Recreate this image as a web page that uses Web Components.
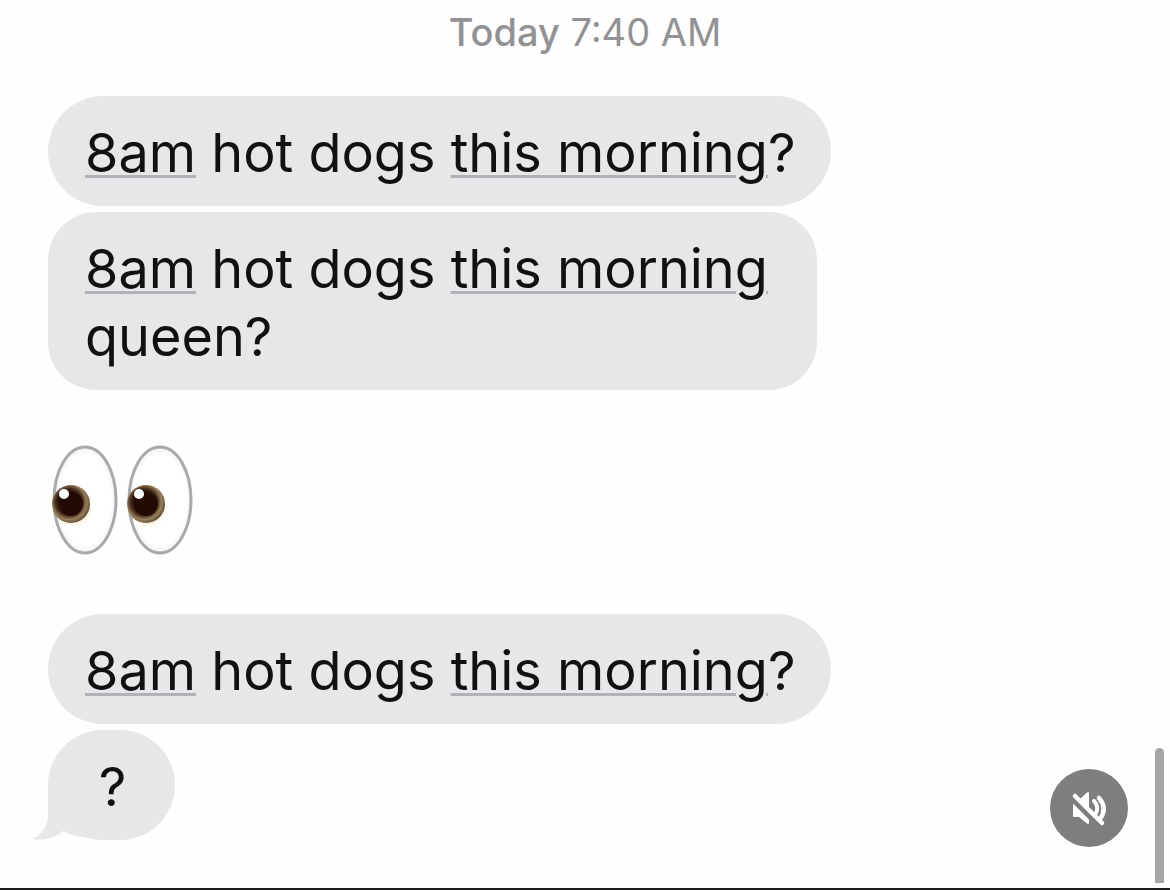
<!DOCTYPE html>
<html lang="en">
<head>
<meta charset="UTF-8">
<meta name="viewport" content="width=device-width, initial-scale=1.0">
<title>Messages</title>
<style>
  body {
    margin: 0;
    background: #fefefe;
    font-family: Inter, Roboto, sans-serif;
  }
</style>
</head>
<body>

<chat-thread>
  <time-stamp slot="header"><b>Today</b> 7:40 AM</time-stamp>
  <chat-bubble><a href="#event">8am</a> hot dogs <a href="#event">this morning</a>?</chat-bubble>
  <chat-bubble narrow><a href="#event">8am</a> hot dogs <a href="#event">this morning</a> queen?</chat-bubble>
  <eyes-emoji></eyes-emoji>
  <chat-bubble><a href="#event">8am</a> hot dogs <a href="#event">this morning</a>?</chat-bubble>
  <chat-bubble tail>?</chat-bubble>
  <scroll-thumb slot="overlay"></scroll-thumb>
  <mute-button slot="overlay"></mute-button>
</chat-thread>

<script>
class ChatThread extends HTMLElement {
  connectedCallback() {
    if (this.shadowRoot) return;

    const shadow = this.attachShadow({ mode: 'open' });

    shadow.innerHTML = `
      <style>
        :host {
          display: flex;
          flex-direction: column;
          position: relative;
          min-height: 100vh;
          box-sizing: border-box;
          border-bottom: 2px solid #1c1c1c;
        }

        header {
          padding: 8px 0 40px;
        }

        main {
          display: flex;
          flex-direction: column;
          align-items: flex-start;
          gap: 6px;
          padding: 0 48px 48px;
        }
      </style>

      <header><slot name="header"></slot></header>
      <main><slot></slot></main>
      <slot name="overlay"></slot>
    `;
  }
}

class TimeStamp extends HTMLElement {
  connectedCallback() {
    if (this.shadowRoot) return;

    const shadow = this.attachShadow({ mode: 'open' });

    shadow.innerHTML = `
      <style>
        :host {
          display: block;
          text-align: center;
          font-size: 38px;
          line-height: 48px;
          color: #929294;
        }

        ::slotted(b) {
          font-weight: 500;
        }
      </style>

      <slot></slot>
    `;
  }
}

class ChatBubble extends HTMLElement {
  connectedCallback() {
    if (this.shadowRoot) return;

    const shadow = this.attachShadow({ mode: 'open' });

    shadow.innerHTML = `
      <style>
        :host {
          display: block;
          position: relative;
          box-sizing: border-box;
          min-width: 127px;
          max-width: 80%;
          padding: 23px 35px 19px 37px;
          border-radius: 55px;
          background: #e7e7ea;
          color: #111113;
          font-size: 54px;
          line-height: 68px;
        }

        :host([narrow]) {
          max-width: 769px;
          border-radius: 48px;
        }

        :host([tail]) {
          text-align: center;
        }

        /* detected dates get a thin grey underline */
        ::slotted(a) {
          color: inherit;
          text-decoration: underline;
          text-decoration-color: #b1b1b6;
          text-decoration-thickness: 3px;
          text-underline-offset: 3px;
        }

        .tail {
          display: none;
          position: absolute;
          left: -16px;
          bottom: 0;
          width: 56px;
          height: 56px;
          fill: #e7e7ea;
        }

        :host([tail]) .tail {
          display: block;
        }
      </style>

      <svg class="tail" viewBox="0 0 56 56" aria-hidden="true">
        <path d="M16 0V31C16 43 10 50 1 55C14 57 24 53 31 47Q40 52 56 54V0Z"/>
      </svg>
      <slot></slot>
    `;
  }
}

class EyesEmoji extends HTMLElement {
  connectedCallback() {
    if (this.shadowRoot) return;

    const shadow = this.attachShadow({ mode: 'open' });

    shadow.innerHTML = `
      <style>
        :host {
          display: block;
          margin: 48px 0 52px;
        }

        svg {
          display: block;
          width: 148px;
          height: 112px;
        }
      </style>

      <svg viewBox="0 0 148 112" role="img" aria-label="eyes">
        <defs>
          <radialGradient id="white" cx=".5" cy=".5" r=".5">
            <stop offset=".85" stop-color="#fff"/>
            <stop offset="1" stop-color="#f1f1f3"/>
          </radialGradient>
          <radialGradient id="iris" cx=".45" cy=".45" r=".55">
            <stop offset=".5" stop-color="#260e07"/>
            <stop offset=".66" stop-color="#4b3020"/>
            <stop offset=".84" stop-color="#98805a"/>
            <stop offset="1" stop-color="#66533e"/>
          </radialGradient>
          <radialGradient id="glow">
            <stop offset=".6" stop-color="#fbeac9"/>
            <stop offset="1" stop-color="#fff" stop-opacity="0"/>
          </radialGradient>
          <clipPath id="edge"><ellipse cx="37" cy="56" rx="33" ry="54"/></clipPath>
          <g id="eye">
            <ellipse cx="37" cy="56" rx="31" ry="53" fill="url(#white)"/>
            <circle cx="25" cy="63" r="23" fill="url(#glow)" clip-path="url(#edge)"/>
            <ellipse cx="37" cy="56" rx="31" ry="53" fill="none" stroke="#aaaaac" stroke-width="3"/>
            <g clip-path="url(#edge)">
              <circle cx="23" cy="60" r="19" fill="url(#iris)"/>
              <circle cx="23" cy="60" r="12" fill="#230b05"/>
            </g>
            <circle cx="16" cy="50" r="5" fill="#fff"/>
          </g>
        </defs>
        <use href="#eye"/>
        <use href="#eye" x="75"/>
      </svg>
    `;
  }
}

class MuteButton extends HTMLElement {
  connectedCallback() {
    if (this.shadowRoot) return;

    const shadow = this.attachShadow({ mode: 'open' });

    shadow.innerHTML = `
      <style>
        :host {
          display: block;
          position: absolute;
          right: 42px;
          bottom: 41px;
        }

        button {
          display: block;
          width: 78px;
          height: 78px;
          padding: 0;
          border: 0;
          border-radius: 50%;
          background: #7e7e7e;
          cursor: pointer;
        }

        svg {
          display: block;
          width: 78px;
          height: 78px;
        }
      </style>

      <button type="button" aria-label="Unmute">
        <svg viewBox="0 0 78 78" fill="none">
          <path d="M23 31H29L37 23.500Q39 22 39 24.500V53.500Q39 56 37 54.500L29 48H24Q23 48 23 47Z" fill="#fff"/>
          <path d="M44 32Q50 38 45 46" stroke="#fff" stroke-width="4" stroke-linecap="round"/>
          <path d="M49 29Q58 39 50 50" stroke="#fff" stroke-width="4.500" stroke-linecap="round"/>
          <path d="M20 28L50 58" stroke="#7e7e7e" stroke-width="5"/>
          <path d="M25 27L52 54" stroke="#fff" stroke-width="4.500" stroke-linecap="round"/>
        </svg>
      </button>
    `;
  }
}

class ScrollThumb extends HTMLElement {
  connectedCallback() {
    if (this.shadowRoot) return;

    const shadow = this.attachShadow({ mode: 'open' });

    shadow.innerHTML = `
      <style>
        :host {
          display: block;
          position: absolute;
          right: 6px;
          bottom: 5px;
          width: 9px;
          height: 135px;
          border-radius: 5px 5px 0 0;
          background: #a6a6a6;
        }
      </style>
    `;
  }
}

customElements.define('chat-thread', ChatThread);
customElements.define('time-stamp', TimeStamp);
customElements.define('chat-bubble', ChatBubble);
customElements.define('eyes-emoji', EyesEmoji);
customElements.define('mute-button', MuteButton);
customElements.define('scroll-thumb', ScrollThumb);
</script>
</body>
</html>
